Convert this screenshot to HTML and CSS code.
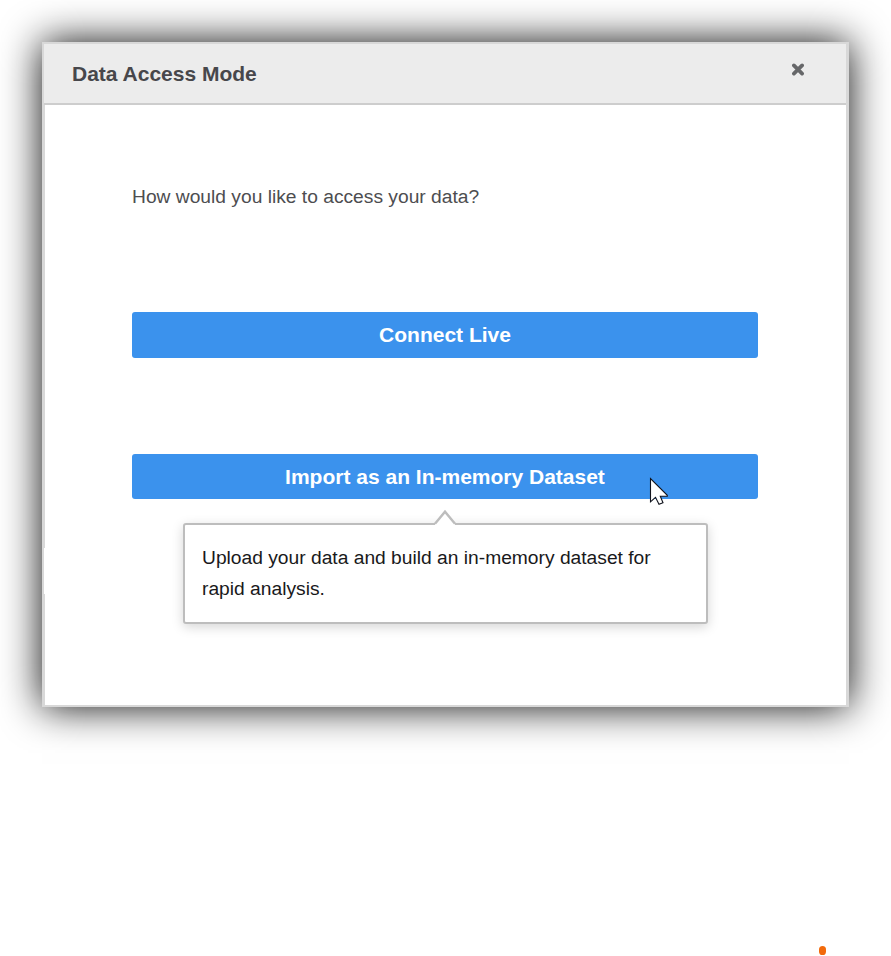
FILE: index.html
```
<!DOCTYPE html>
<html lang="en">
<head>
<meta charset="utf-8">
<title>Data Access Mode</title>
<link rel="stylesheet" href="styles.css">
</head>
<body>
<main class="dialog">
  <header class="header">
    <h1 class="title">Data Access Mode</h1>
    <button class="close" aria-label="Close">
      <svg width="14" height="14" viewBox="0 0 14 14"><path d="M2.9 2.4 11.1 10.6M11.1 2.4 2.9 10.6"/></svg>
    </button>
  </header>
  <section class="content">
    <p class="question">How would you like to access your data?</p>
    <button class="action live">Connect Live</button>
    <div class="import-group">
      <button class="action import">Import as an In-memory Dataset</button>
      <div class="tooltip">
        <svg class="arrow" width="24" height="16" viewBox="0 0 24 16"><path class="fill" d="M2 16V14.5L12 2 22 14.5V16Z"/><path class="line" d="M2 14.7 12 2.7 22 14.7"/></svg>
        <p>Upload your data and build an in-memory dataset for<br>rapid analysis.</p>
      </div>
      <svg class="cursor" width="20" height="29" viewBox="0 0 20 29"><path d="M1.5 1.5V24.8L6.5 20.3 10 27.3 14 25.8 11.3 19.3H18.3V18.3Z"/></svg>
    </div>
  </section>
  <i class="edge-gap"></i>
</main>
<i class="marker"></i>
</body>
</html>
```
FILE: styles.css
```
* { box-sizing: border-box; }
body {
  margin: 0;
  height: 956px;
  padding: 42px;
  position: relative;
  overflow: hidden;
  background: #fff;
  font-family: "Liberation Sans", Arial, sans-serif;
}
h1, p { margin: 0; }
button { border: 0; padding: 0; font-family: inherit; }
.dialog {
  position: relative;
  width: 807px;
  height: 665px;
  border: 2px solid #d8d8d8;
  border-left-width: 3px;
  border-right-width: 3px;
  background: #fff;
  box-shadow: 0 0 38px rgba(0, 0, 0, .96);
}
.header {
  display: flex;
  justify-content: space-between;
  height: 61px;
  margin-left: -1px;
  padding: 0 41px 0 28px;
  background: #ececec;
  border-bottom: 2px solid #cdcdcd;
}
.title {
  font-size: 21px;
  line-height: 60px;
  color: #47474b;
  white-space: nowrap;
}
.close { width: 14px; height: 14px; margin-top: 19px; background: none; }
.close svg { display: block; }
.close path { stroke: #666769; stroke-width: 3.7; stroke-linecap: round; fill: none; }
.content { padding: 77px 88px 0 87px; }
.question {
  height: 30px;
  font-size: 19.23px;
  line-height: 30px;
  color: #4d4d50;
}
.action {
  display: block;
  width: 626px;
  height: 46px;
  border-radius: 3px;
  background: #3b92ed;
  color: #fff;
  font-size: 21px;
  font-weight: bold;
}
.live { margin-top: 100px; }
.import-group { position: relative; margin-top: 96px; }
.import { height: 45px; padding-top: 1px; }
.tooltip {
  position: absolute;
  top: 69px;
  left: 51px;
  width: 525px;
  height: 101px;
  padding: 17px;
  border: 2px solid #bdbdbd;
  border-radius: 3px;
  background: #fff;
  box-shadow: 0 3px 12px rgba(0, 0, 0, .17);
  color: #19191b;
  font-size: 19.23px;
  line-height: 31px;
  white-space: nowrap;
}
.arrow { position: absolute; left: 248px; top: -16px; }
.arrow .fill { fill: #fff; }
.arrow .line { fill: none; stroke: #bdbdbd; stroke-width: 2.4; }
.cursor { position: absolute; left: 517px; top: 23px; }
.cursor path { fill: #fff; stroke: #10131c; stroke-width: 1.1; }
.edge-gap { position: absolute; left: -1px; top: 504px; width: 1px; height: 46px; background: #fff; }
.marker { position: absolute; left: 819px; top: 946px; width: 7px; height: 9px; border-radius: 50% / 40%; background: #f26a0b; }
```
